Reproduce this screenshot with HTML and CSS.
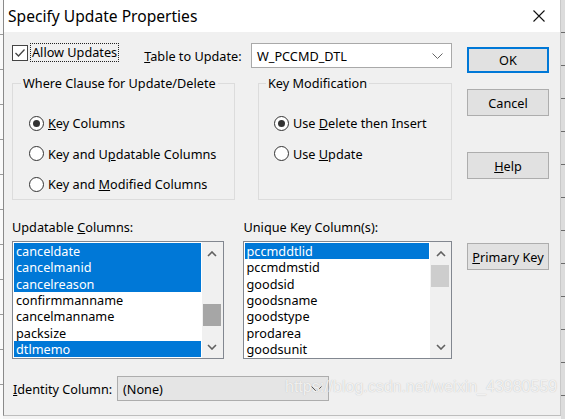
FILE: index.html
```html
<!DOCTYPE html>
<html>
<head>
<meta charset="utf-8">
<link rel="stylesheet" href="styles.css">
</head>
<body>
<div class="screen">
  <div class="side side-left"></div>
  <div class="dialog">
    <div class="titlebar">
      <span class="title">Specify Update Properties</span>
      <span class="close"><svg width="12" height="12" viewBox="0 0 12 12"><path d="M0.5 0.5 L11.5 11.5 M11.5 0.5 L0.5 11.5" stroke="#111" stroke-width="1.1" fill="none"/></svg></span>
    </div>
    <div class="body">
      <div class="main">
        <div class="row1">
          <span class="check"><svg width="14" height="14" viewBox="0 0 14 14"><path d="M2.5 7 L5.5 10 L11.5 3.5" stroke="#444" stroke-width="1.3" fill="none"/></svg></span>
          <span class="allow">Allow Updates</span>
          <span class="table-label"><u>T</u>able to Update:</span>
          <div class="combo combo-table">
            <span>W_PCCMD_DTL</span>
            <svg class="chev" width="11" height="6" viewBox="0 0 11 6"><path d="M0.5 0.5 L5.5 5.5 L10.5 0.5" stroke="#666" stroke-width="1" fill="none"/></svg>
          </div>
        </div>
        <div class="groups">
          <fieldset class="group group-where">
            <legend>Where Clause for Update/Delete</legend>
            <div class="radios">
              <div class="radio-row"><span class="radio on"></span><span><u>K</u>ey Columns</span></div>
              <div class="radio-row"><span class="radio"></span><span>Key and U<u>p</u>datable Columns</span></div>
              <div class="radio-row"><span class="radio"></span><span>Key and <u>M</u>odified Columns</span></div>
            </div>
          </fieldset>
          <fieldset class="group group-key">
            <legend>Key Modification</legend>
            <div class="radios">
              <div class="radio-row"><span class="radio on"></span><span>Use <u>D</u>elete then Insert</span></div>
              <div class="radio-row"><span class="radio"></span><span>Use <u>U</u>pdate</span></div>
            </div>
          </fieldset>
        </div>
        <div class="lists">
          <div class="list-col col-left">
            <div class="list-label">Updatable <u>C</u>olumns:</div>
            <div class="listbox">
              <div class="items">
                <div class="item sel">canceldate</div>
                <div class="item sel">cancelmanid</div>
                <div class="item sel">cancelreason</div>
                <div class="item">confirmmanname</div>
                <div class="item">cancelmanname</div>
                <div class="item">packsize</div>
                <div class="item sel">dtlmemo</div>
              </div>
              <div class="scroll">
                <div class="arrow"><svg width="10" height="6" viewBox="0 0 10 6"><path d="M1 5 L5 1 L9 5" stroke="#606060" stroke-width="1.6" fill="none"/></svg></div>
                <div class="thumb thumb-left"></div>
                <div class="arrow arrow-down"><svg width="10" height="6" viewBox="0 0 10 6"><path d="M1 1 L5 5 L9 1" stroke="#606060" stroke-width="1.6" fill="none"/></svg></div>
              </div>
            </div>
          </div>
          <div class="list-col col-right">
            <div class="list-label">Unique Key Column(s):</div>
            <div class="listbox">
              <div class="items">
                <div class="item sel">pccmddtlid</div>
                <div class="item">pccmdmstid</div>
                <div class="item">goodsid</div>
                <div class="item">goodsname</div>
                <div class="item">goodstype</div>
                <div class="item">prodarea</div>
                <div class="item">goodsunit</div>
              </div>
              <div class="scroll">
                <div class="arrow"><svg width="10" height="6" viewBox="0 0 10 6"><path d="M1 5 L5 1 L9 5" stroke="#606060" stroke-width="1.6" fill="none"/></svg></div>
                <div class="thumb thumb-right"></div>
                <div class="arrow arrow-down"><svg width="10" height="6" viewBox="0 0 10 6"><path d="M1 1 L5 5 L9 1" stroke="#606060" stroke-width="1.6" fill="none"/></svg></div>
              </div>
            </div>
          </div>
        </div>
        <div class="identity">
          <span class="identity-label"><u>I</u>dentity Column:</span>
          <div class="combo combo-identity">
            <span>(None)</span>
            <svg class="chev" width="11" height="6" viewBox="0 0 11 6"><path d="M0.5 0.5 L5.5 5.5 L10.5 0.5" stroke="#555" stroke-width="1" fill="none"/></svg>
          </div>
        </div>
      </div>
      <div class="buttons">
        <div class="btn btn-ok">OK</div>
        <div class="btn btn-cancel">Cancel</div>
        <div class="btn btn-help"><u>H</u>elp</div>
        <div class="btn btn-pk"><u>P</u>rimary Key</div>
      </div>
    </div>
    <div class="watermark">https://blog.csdn.net/weixin_43980559</div>
  </div>
  <div class="side side-right"></div>
</div>
</body>
</html>
```

FILE: styles.css
```css
html, body {
  margin: 0;
  padding: 0;
}
body {
  width: 565px;
  height: 419px;
  overflow: hidden;
  background: #f3f3f3;
  font-family: "Noto Sans", "Open Sans", sans-serif;
  font-size: 12.7px;
  color: #000;
}
.screen {
  display: flex;
  height: 419px;
}
.side {
  height: 419px;
}
.side-left {
  width: 3px;
  background: repeating-linear-gradient(#fafafa 0, #fafafa 34px, #9a9a9a 34px, #9a9a9a 35px);
}
.side-right {
  width: 4px;
  background: repeating-linear-gradient(#dcdcdc 0, #dcdcdc 32px, #6b6b6b 32px, #6b6b6b 33px);
}
.dialog {
  position: relative;
  width: 558px;
  height: 416px;
  box-sizing: border-box;
  border-left: 1px solid #8a8a8a;
  border-right: 1px solid #c8c8c8;
  border-bottom: 1px solid #bdbdbd;
  background: #f0f0f0;
}
.titlebar {
  height: 32px;
  background: #fff;
  display: flex;
  align-items: center;
  justify-content: space-between;
  padding-left: 4px;
}
.title {
  font-size: 15.6px;
  line-height: 20px;
  color: #000;
}
.close {
  width: 42px;
  height: 32px;
  display: flex;
  align-items: center;
  justify-content: center;
}
.body {
  display: flex;
  gap: 15px;
  padding: 11px 0 0 8px;
}
.main {
  width: 440px;
}
.row1 {
  display: flex;
  align-items: center;
  height: 25px;
}
.check {
  align-self: flex-start;
  margin-top: 2px;
  width: 16px;
  height: 16px;
  box-sizing: border-box;
  border: 1px solid #444;
  background: #fff;
  display: flex;
  align-items: center;
  justify-content: center;
}
.allow {
  align-self: flex-start;
  margin-left: 2px;
  height: 19px;
  box-sizing: border-box;
  border: 1px dotted #222;
  padding: 0 1px;
  line-height: 17px;
}
.table-label {
  margin-left: 25px;
}
.combo {
  display: flex;
  align-items: center;
  justify-content: space-between;
  box-sizing: border-box;
  height: 25px;
  padding: 0 8px 0 5px;
}
.combo-table {
  margin-left: auto;
  width: 201px;
  background: #fff;
  border: 1px solid #a9a9a9;
}
.groups {
  display: flex;
  gap: 23px;
  margin-top: 7px;
}
.group {
  margin: 0;
  padding: 0 0 0 16px;
  border: 1px solid #dcdcdc;
  height: 125px;
  box-sizing: border-box;
}
.group legend {
  margin-left: -8px;
  padding: 0 2px;
  line-height: 16px;
}
.group-where {
  width: 223px;
}
.group-key {
  width: 194px;
  padding-left: 15px;
}
.radios {
  margin-top: 17px;
  display: flex;
  flex-direction: column;
}
.radio-row {
  display: flex;
  align-items: center;
  gap: 4px;
  height: 30.5px;
  white-space: nowrap;
}
.radio {
  width: 15px;
  height: 15px;
  box-sizing: border-box;
  border: 1px solid #333;
  border-radius: 50%;
  background: #fff;
  display: flex;
  align-items: center;
  justify-content: center;
  flex: none;
}
.radio.on::after {
  content: "";
  width: 7px;
  height: 7px;
  border-radius: 50%;
  background: #333;
}
.lists {
  display: flex;
  gap: 19px;
  margin-top: 19px;
}
.col-left {
  width: 212px;
}
.col-right {
  width: 210px;
}
.col-right .list-label {
  padding-left: 1px;
}
.list-label {
  line-height: 16px;
  height: 16px;
}
.listbox {
  margin-top: 6px;
  height: 118px;
  box-sizing: border-box;
  border: 1px solid #828790;
  background: #fff;
  display: flex;
}
.items {
  flex: 1;
  padding: 1px;
  min-width: 0;
}
.item {
  height: 16.33px;
  line-height: 16.33px;
  padding-left: 2px;
  white-space: nowrap;
}
.item.sel {
  background: #0078d7;
  color: #fff;
}
.scroll {
  width: 21px;
  background: #f0f0f0;
  display: flex;
  flex-direction: column;
}
.arrow {
  height: 23px;
  display: flex;
  align-items: center;
  justify-content: center;
}
.arrow-down {
  margin-top: auto;
}
.thumb {
  margin: 0 2px 0 1px;
  height: 21.5px;
}
.thumb-left {
  margin-top: 39px;
  background: #a6a6a6;
}
.thumb-right {
  background: #cdcdcd;
}
.identity {
  display: flex;
  align-items: center;
  margin-top: 17px;
  height: 25px;
}
.identity-label {
  width: 105px;
  padding-left: 1px;
  box-sizing: border-box;
}
.combo-identity {
  width: 212px;
  background: #e5e5e5;
  border: 1px solid #adadad;
  padding-right: 6px;
}
.buttons {
  width: 82px;
  display: flex;
  flex-direction: column;
}
.btn {
  height: 27px;
  box-sizing: border-box;
  background: #e1e1e1;
  border: 1px solid #adadad;
  display: flex;
  align-items: center;
  justify-content: center;
  white-space: nowrap;
}
.btn-ok {
  margin-top: 4px;
  height: 26px;
  border: 2px solid #0078d7;
}
.btn-cancel {
  margin-top: 16px;
}
.btn-help {
  margin-top: 36px;
}
.btn-pk {
  margin-top: 64px;
}
.watermark {
  position: absolute;
  left: 281px;
  top: 378px;
  font-family: "Liberation Sans", Arial, sans-serif;
  font-size: 16px;
  line-height: 18px;
  color: rgba(255, 255, 255, 0.8);
  text-shadow: 0 0 1px #b4b4b4;
  white-space: nowrap;
}
```
